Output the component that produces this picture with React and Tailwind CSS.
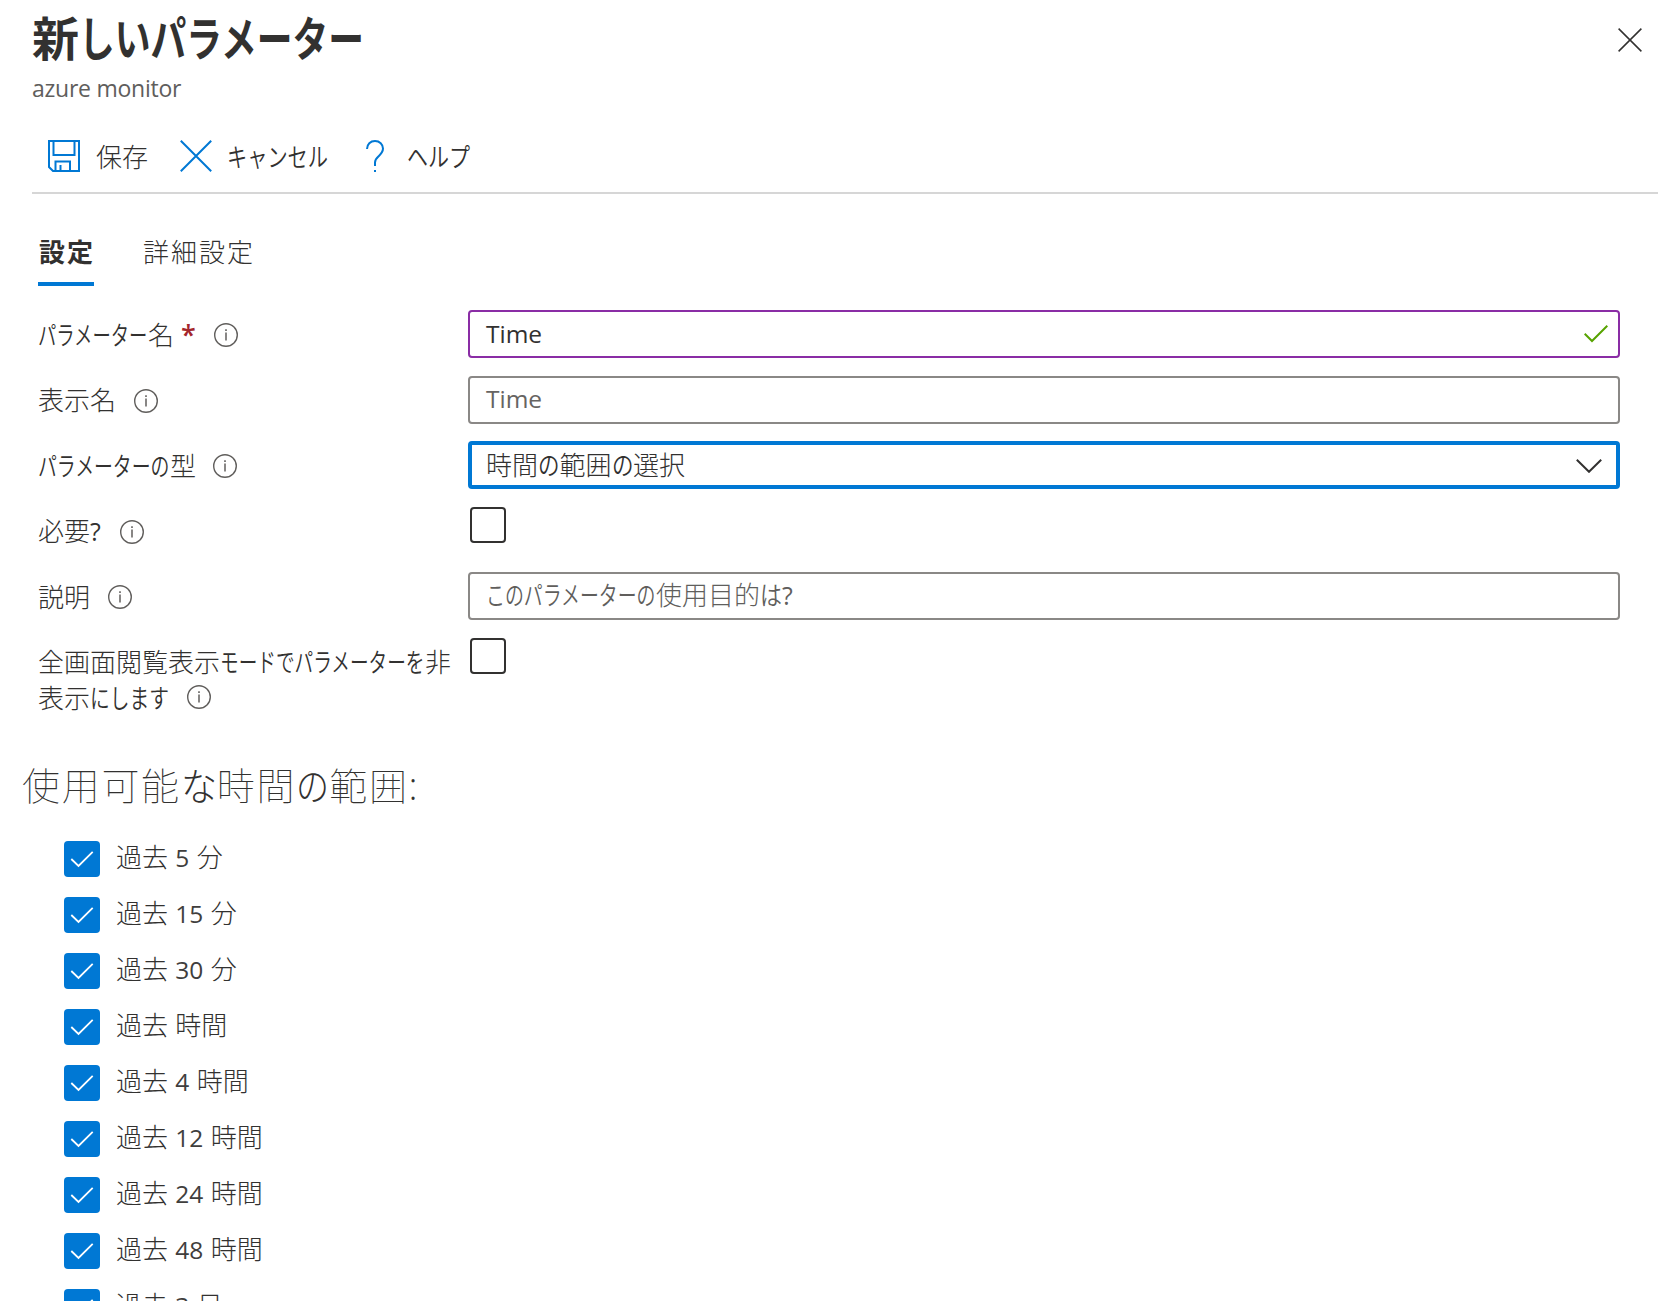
import clsx from "clsx";

const timeRanges = [
  "過去 5 分",
  "過去 15 分",
  "過去 30 分",
  "過去 時間",
  "過去 4 時間",
  "過去 12 時間",
  "過去 24 時間",
  "過去 48 時間",
  "過去 3 日",
];

// Condensed kana run: squeezes the full-width glyphs into `width` pixels
const Kana = ({ children, size = 26, width, className = "font-[350]" }) => (
  <span
    className={clsx(
      "inline-block whitespace-nowrap align-baseline tracking-normal",
      className
    )}
    style={{ width }}
  >
    <span
      className="inline-block origin-left"
      style={{ transform: `scaleX(${width / (children.length * size)})` }}
    >
      {children}
    </span>
  </span>
);

const InfoIcon = ({ className = "ml-[18px]" }) => (
  <svg
    viewBox="0 0 24 24"
    className={clsx("inline-block size-6 shrink-0 text-[#605e5c]", className)}
    fill="none"
    stroke="currentColor"
  >
    <circle cx="12" cy="12" r="11.3" strokeWidth="1.4" />
    <path d="M12 9.5V17.5" strokeWidth="1.5" />
    <path d="M12 6.3V8" strokeWidth="1.6" />
  </svg>
);

const SaveIcon = () => (
  <svg
    viewBox="0 0 32 32"
    className="size-8 shrink-0"
    fill="none"
    stroke="#0078d4"
    strokeWidth="2"
  >
    <path d="M1 1H31V31H5L1 27Z" />
    <path d="M5.5 1V15H26.5V1" />
    <path d="M7.5 31V21.5H22V31" />
    <path d="M12.5 25V31" />
  </svg>
);

const CrossIcon = ({ className, strokeWidth = 2 }) => (
  <svg
    viewBox="0 0 32 32"
    className={clsx("shrink-0", className)}
    fill="none"
    stroke="currentColor"
    strokeWidth={strokeWidth}
  >
    <path d="M0.8 0.8L31.2 31.2M31.2 0.8L0.8 31.2" />
  </svg>
);

const HelpIcon = () => (
  <svg
    viewBox="0 0 18 32"
    className="h-8 w-[18px] shrink-0"
    fill="none"
    stroke="#0078d4"
    strokeWidth="2"
  >
    <path d="M1 9C1 4.2 4.4 1 9 1C13.6 1 17 4.2 17 8.6C17 12.2 15 14 12.6 16.2C10.4 18.2 9 19.6 9 22.4V26" />
    <path d="M9 30V32" />
  </svg>
);

const CheckBox = ({ checked }) =>
  checked ? (
    <span className="flex size-9 shrink-0 items-center justify-center rounded-[4px] bg-[#0078d4]">
      <svg
        viewBox="0 0 36 36"
        className="size-9"
        fill="none"
        stroke="white"
        strokeWidth="1.8"
      >
        <path d="M7.3 18L14.5 25L28.7 10.8" />
      </svg>
    </span>
  ) : (
    <span className="ml-0.5 block size-9 rounded-[4px] border-2 border-[#323130]" />
  );

const Field = ({ label, children }) => (
  <div className="grid h-[65.5px] grid-cols-[430px_1152px]">
    <div className="flex h-[50px] items-center whitespace-nowrap">{label}</div>
    <div>{children}</div>
  </div>
);

const inputClass =
  "flex h-12 w-full items-center justify-between rounded-[4px] bg-white leading-none";

export default function App() {
  return (
    <div className="h-[1301px] w-[1658px] overflow-hidden bg-white font-['Open_Sans','Noto_Sans_CJK_JP',sans-serif] text-[26px] text-[#323130]">
      {/* Header */}
      <header className="flex h-[116px] justify-between pl-8">
        <div>
          <h1 className="mt-2 h-[60px] whitespace-nowrap text-[47px] font-bold leading-[60px]">
            新
            <Kana size={47} width={286} className="font-bold">
              しいパラメーター
            </Kana>
          </h1>
          <p className="mt-0.5 text-[23px] leading-9 tracking-[-0.25px] text-[#605e5c]">
            azure monitor
          </p>
        </div>
        <button className="mr-4 mt-7 h-6 w-6">
          <CrossIcon className="size-6" />
        </button>
      </header>

      {/* Command bar */}
      <div className="ml-8 flex h-[78px] items-center border-b-2 border-[#d6d6d6] pl-4 pt-1">
        <button className="flex items-center">
          <SaveIcon />
          <span className="ml-4 w-[52px] whitespace-nowrap pt-0.5 font-light">
            保存
          </span>
        </button>
        <button className="ml-8 flex items-center">
          <CrossIcon className="size-8 text-[#0078d4]" />
          <span className="ml-[15px] pt-0.5">
            <Kana width={101}>キャンセル</Kana>
          </span>
        </button>
        <button className="ml-[38px] flex items-center">
          <HelpIcon />
          <span className="ml-[23px] pt-0.5">
            <Kana width={63}>ヘルプ</Kana>
          </span>
        </button>
      </div>

      {/* Tabs */}
      <div className="flex h-[116px] gap-12 pl-[38px] pt-9 tracking-[2px]">
        <div className="h-14 w-14 whitespace-nowrap border-b-4 border-[#0078d4] pl-px font-bold leading-[44px]">
          設定
        </div>
        <div className="h-14 pl-px font-light leading-[44px]">詳細設定</div>
      </div>

      {/* Form */}
      <div className="pl-[38px] font-light">
        <Field
          label={
            <>
              <Kana width={110}>パラメーター</Kana>名
              <span className="ml-[7px] w-[15px] text-[27px] font-semibold text-[#a4262c]">
                *
              </span>
              <InfoIcon />
            </>
          }
        >
          <div
            className={clsx(
              inputClass,
              "border-2 border-[#8a2da5] pl-4 pr-2.5 text-[24.5px] font-normal"
            )}
          >
            Time
            <svg
              viewBox="0 0 24 18"
              className="h-[18px] w-6"
              fill="none"
              stroke="#57a300"
              strokeWidth="2"
            >
              <path d="M0.7 8.7L8 16L23.3 0.8" />
            </svg>
          </div>
        </Field>
        <Field
          label={
            <>
              表示名
              <InfoIcon />
            </>
          }
        >
          <div
            className={clsx(
              inputClass,
              "border-2 border-[#8a8886] px-4 text-[24.5px] font-normal text-[#666462]"
            )}
          >
            Time
          </div>
        </Field>
        <Field
          label={
            <>
              <Kana width={132}>パラメーターの</Kana>型
              <InfoIcon className="ml-[17px]" />
            </>
          }
        >
          <div
            className={clsx(
              inputClass,
              "border-4 border-[#0078d4] pl-3.5 pr-3.5"
            )}
          >
            <span>
              時間<Kana width={21.5}>の</Kana>範囲
              <Kana width={21.5}>の</Kana>選択
            </span>
            <svg
              viewBox="0 0 26 14"
              className="mt-px h-3.5 w-[26px]"
              fill="none"
              stroke="#323130"
              strokeWidth="2"
            >
              <path d="M0.8 0.8L13 12.8L25.2 0.8" />
            </svg>
          </div>
        </Field>
        <Field
          label={
            <>
              必要<span className="text-[25px] font-normal">?</span>
              <InfoIcon className="ml-[19px]" />
            </>
          }
        >
          <CheckBox />
        </Field>
        <Field
          label={
            <>
              説明
              <InfoIcon />
            </>
          }
        >
          <div
            className={clsx(
              inputClass,
              "border-2 border-[#8a8886] px-4 pb-0.5 text-[#605e5c]"
            )}
          >
            <span>
              <Kana width={170}>このパラメーターの</Kana>
              使用目的
              <Kana width={22}>は</Kana>
              <span className="text-[25px] font-normal">?</span>
            </span>
          </div>
        </Field>
        <div className="grid grid-cols-[430px_1152px]">
          <div className="whitespace-nowrap pt-1.5 leading-9">
            <div>
              全画面閲覧表示
              <Kana width={205}>モードでパラメーターを</Kana>非
            </div>
            <div className="flex items-center">
              表示<Kana width={79}>にします</Kana>
              <InfoIcon className="-mt-0.5 ml-[18px]" />
            </div>
          </div>
          <CheckBox />
        </div>
      </div>

      {/* Available time ranges */}
      <h2 className="mt-[39px] h-[60px] pl-[22px] text-[38px] font-thin leading-[60px] tracking-[1.7px]">
        使用可能
        <Kana size={38} width={36} className="font-light">
          な
        </Kana>
        時間
        <Kana size={38} width={33} className="font-light">
          の
        </Kana>
        範囲:
      </h2>
      <ul className="flex flex-col gap-5 pl-16 pt-[26px]">
        {timeRanges.map((range) => (
          <li key={range} className="flex h-9 items-center">
            <CheckBox checked />
            <span className="ml-4 whitespace-nowrap pb-0.5 font-light [word-spacing:0.6px]">
              {range.split(/(\d+)/).map((part, index) =>
                /\d/.test(part) ? (
                  <span
                    key={index}
                    className="text-[24.5px] font-normal text-[#3f3e3d]"
                  >
                    {part}
                  </span>
                ) : (
                  part
                )
              )}
            </span>
          </li>
        ))}
      </ul>
    </div>
  );
}
